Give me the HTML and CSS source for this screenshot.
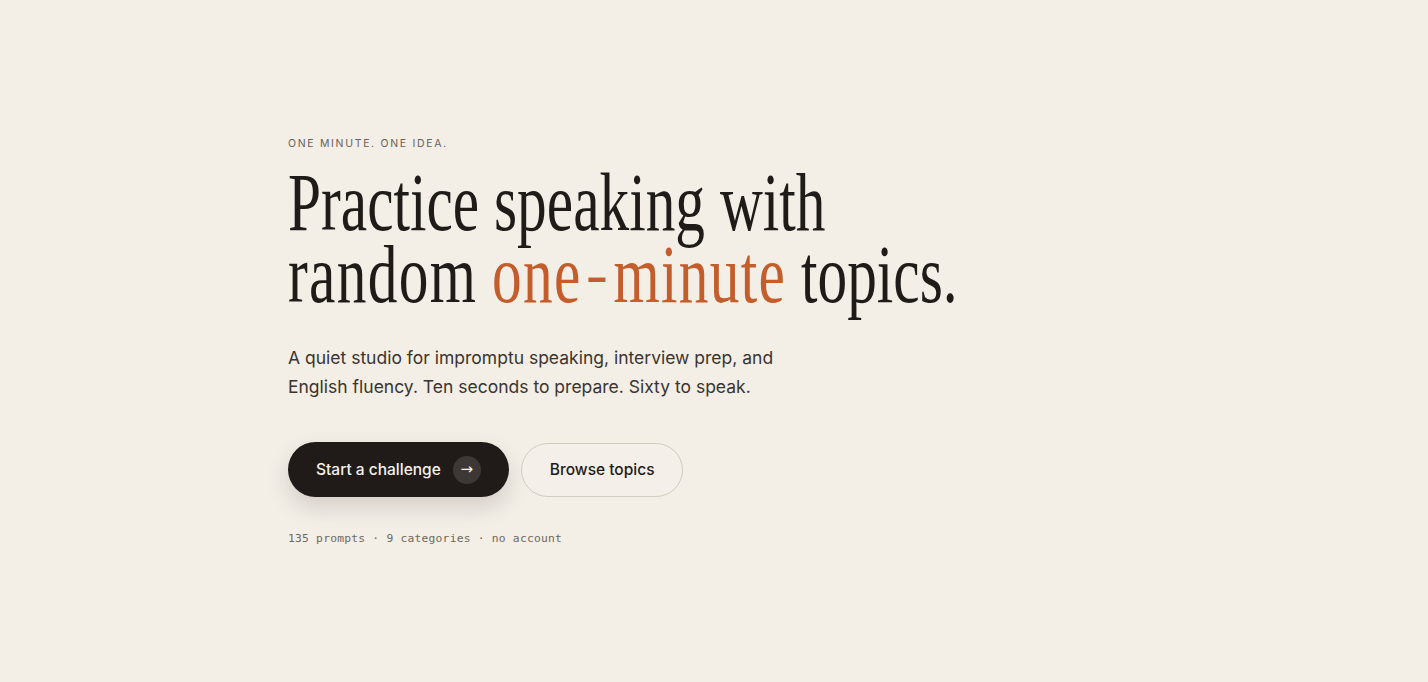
FILE: index.html
```html
<!DOCTYPE html>
<html lang="en">
<head>
<meta charset="utf-8">
<title>One minute. One idea.</title>
<link rel="stylesheet" href="styles.css">
</head>
<body>
<main class="hero">
  <p class="eyebrow">ONE MINUTE. ONE IDEA.</p>
  <h1 class="title"><span class="line">Practice speaking with</span><span class="line line-2"><span class="wide">random</span> <span class="accent wide">one<span class="dash">-</span>minute</span> topics.</span></h1>
  <p class="lede">A quiet studio for impromptu speaking, interview prep, and<br>English fluency. Ten seconds to prepare. Sixty to speak.</p>
  <div class="actions">
    <a class="btn btn-primary" href="#">Start a challenge <span class="btn-icon">&rarr;</span></a>
    <a class="btn btn-ghost" href="#">Browse topics</a>
  </div>
  <p class="meta">135 prompts · 9 categories · no account</p>
</main>
</body>
</html>
```
FILE: styles.css
```css
* { box-sizing: border-box; }
html, body { margin: 0; padding: 0; }
body {
  background: #f3eee6;
  color: #1f1b18;
  font-family: "Inter", "Liberation Sans", sans-serif;
  min-height: 682px;
}
.hero {
  max-width: 852px;
  margin: 0 auto;
  padding-top: 138px;
}
.eyebrow {
  margin: 0;
  font-family: "Inter", "Liberation Sans", sans-serif;
  font-size: 10.5px;
  letter-spacing: 0.16em;
  color: #6a625b;
  line-height: 12px;
}
.title {
  margin: 17px 0 0;
  font-family: "Liberation Serif", serif;
  font-weight: 400;
  font-size: 82px;
  line-height: 72px;
  letter-spacing: 0;
  color: #1f1b18;
  transform: scaleX(0.724);
  transform-origin: left center;
  white-space: nowrap;
}
.line { display: block; height: 72px; }
.wide {
  display: inline-block;
  letter-spacing: 0.022em;
  line-height: 72px;
  height: 72px;
  vertical-align: top;
}
.dash {
  display: inline-block;
  margin: 0 0.09em;
  transform: scale(1.1, 0.72);
}
.accent { color: #c45d2c; }
.lede {
  margin: 32px 0 0;
  font-size: 17.5px;
  line-height: 29px;
  color: #3a3430;
}
.actions {
  display: flex;
  gap: 12px;
  margin-top: 41px;
  align-items: center;
}
.btn {
  display: inline-flex;
  align-items: center;
  height: 55px;
  border-radius: 999px;
  text-decoration: none;
  font-size: 15.5px;
  font-weight: 500;
}
.btn-primary {
  background: #201b18;
  color: #f6f1ea;
  padding: 0 28px 0 28px;
  gap: 12px;
  box-shadow: 0 10px 22px rgba(32, 27, 24, 0.15);
}
.btn-icon {
  display: inline-flex;
  align-items: center;
  justify-content: center;
  width: 28px;
  height: 28px;
  border-radius: 50%;
  background: #3d3835;
  font-family: "DejaVu Sans", sans-serif;
  font-weight: 400;
  font-size: 15px;
  padding-bottom: 2px;
}
.btn-ghost {
  color: #1f1b18;
  border: 1px solid #d3cbc0;
  background: #f4efe8;
  padding: 0 28px;
  height: 54px;
}
.meta {
  margin: 35px 0 0;
  font-family: "DejaVu Sans Mono", "Liberation Mono", monospace;
  font-size: 11.3px;
  color: #6f6861;
  letter-spacing: 0.02em;
}
```
